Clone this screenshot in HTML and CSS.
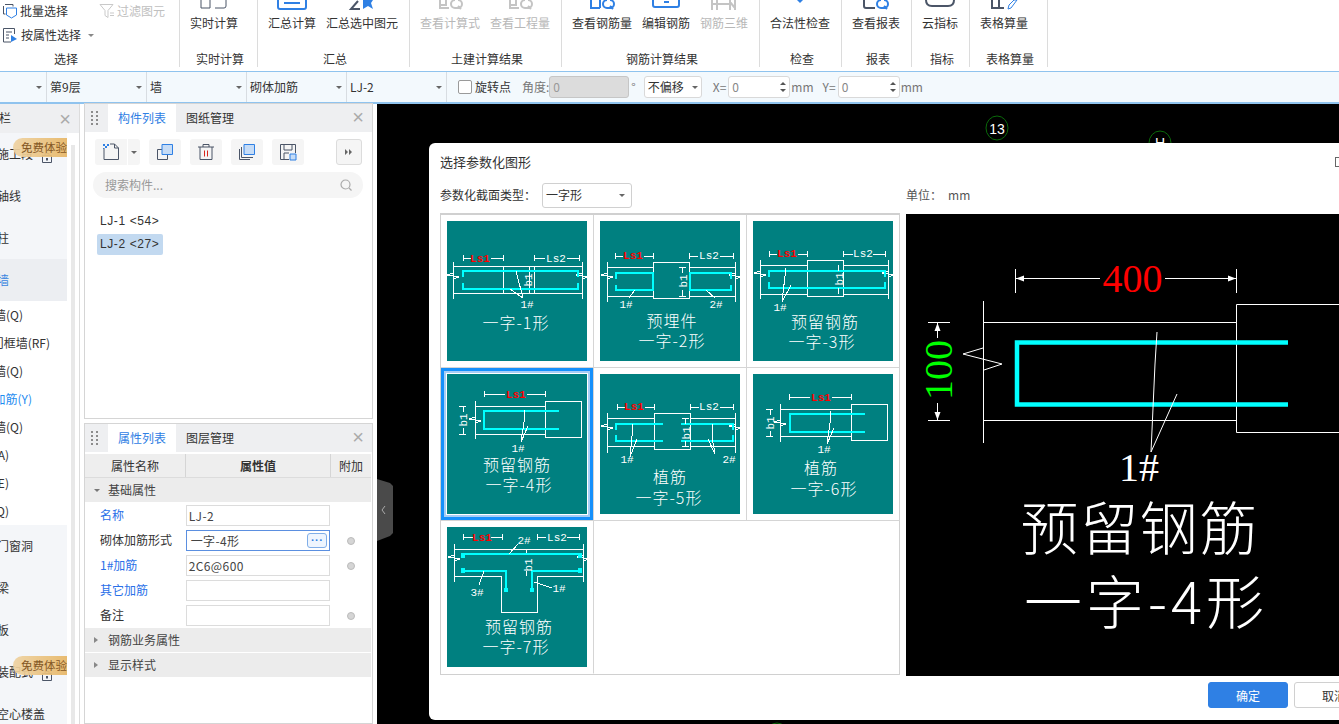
FILE: index.html
```html
<!DOCTYPE html>
<html lang="zh">
<head>
<meta charset="utf-8">
<title>选择参数化图形</title>
<link rel="stylesheet" href="styles.css">
</head>
<body>
<div class="app">
  <header class="ribbon">
    <section class="rb-group g-select">
      <div class="sel-tools">
        <div class="sel-row">
          <span class="sel-item"><svg class="ic16" viewBox="0 0 16 16"><path class="ic-dk" d="M3 1.5h8v2M1.5 3v8h2"/><path class="ic-bl" d="M4.5 5h10v7l-5 3-5-3z"/></svg>批量选择</span>
          <span class="sel-item dis"><svg class="ic16" viewBox="0 0 16 16"><path class="ic-gy" d="M1 1.5h13l-5 6v7l-3-2v-5z"/><path class="ic-gy" d="M11 10h4M11 12.500h4"/></svg>过滤图元</span>
        </div>
        <div class="sel-row">
          <span class="sel-item"><svg class="ic16" viewBox="0 0 16 16"><path class="ic-dk" d="M9 15H1.500V1.500h11V7M4 5h6M4 8h3M4 11h3"/><path class="ic-fill" d="M9 8l6 4-6 3z"/></svg>按属性选择<i class="caret caret-g"></i></span>
        </div>
      </div>
      <div class="rb-label lbl-left">选择</div>
    </section>
    <section class="rb-group g-live">
      <div class="rb-btns">
        <div class="rb-btn"><svg class="top-ic" viewBox="0 0 32 10"><path class="ic-dk" d="M3 0v8h9V0M17 8h9q2 0 2-2V0"/></svg><span>实时计算</span></div>
      </div>
      <div class="rb-label">实时计算</div>
    </section>
    <section class="rb-group g-sum">
      <div class="rb-btns">
        <div class="rb-btn"><svg class="top-ic" viewBox="0 0 32 10"><path class="ic-bl2" d="M2 0v7q0 2 2 2h24q2 0 2-2V0"/><path class="ic-bl2" d="M8 3h16"/></svg><span>汇总计算</span></div>
        <div class="rb-btn"><svg class="top-ic" viewBox="0 0 32 10"><path class="ic-dk2" d="M12 1L5 9h9"/><path class="ic-fill" d="M17 0h10l-2 3 2 6-5-3-5 3z"/></svg><span>汇总选中图元</span></div>
      </div>
      <div class="rb-label">汇总</div>
    </section>
    <section class="rb-group g-civil">
      <div class="rb-btns">
        <div class="rb-btn dis"><svg class="top-ic" viewBox="0 0 32 10"><path class="ic-gy2" d="M6 0v8h9M12 0v5H6M21 0a4 4 0 0 0 0 8h3a4 4 0 0 0 0-8M24 6l3 3"/></svg><span>查看计算式</span></div>
        <div class="rb-btn dis"><svg class="top-ic" viewBox="0 0 32 10"><path class="ic-gy2" d="M6 0v8h9M12 0v5H6M21 0a4 4 0 0 0 0 8h3a4 4 0 0 0 0-8M24 6l3 3"/></svg><span>查看工程量</span></div>
      </div>
      <div class="rb-label">土建计算结果</div>
    </section>
    <section class="rb-group g-rebar">
      <div class="rb-btns">
        <div class="rb-btn"><svg class="top-ic" viewBox="0 0 32 10"><path class="ic-bl2" d="M5 0v8h9M14 0v8M21 0a4 4 0 0 0 0 8h3a4 4 0 0 0 0-8M24 6l3 3"/></svg><span>查看钢筋量</span></div>
        <div class="rb-btn"><svg class="top-ic" viewBox="0 0 32 10"><path class="ic-bl2" d="M3 0v5q0 2 2 2h22q2 0 2-2V0"/><path class="ic-bl2" d="M14 2h5"/></svg><span>编辑钢筋</span></div>
        <div class="rb-btn dis"><svg class="top-ic" viewBox="0 0 32 10"><path class="ic-gy2" d="M4 0v10M9 0v10M4 4h18M22 0v10M27 0v10M22 2l5 6"/></svg><span>钢筋三维</span></div>
      </div>
      <div class="rb-label">钢筋计算结果</div>
    </section>
    <section class="rb-group g-check">
      <div class="rb-btns">
        <div class="rb-btn"><svg class="top-ic" viewBox="0 0 32 10"><path class="ic-fill" d="M13 0h6l-3 3z"/></svg><span>合法性检查</span></div>
      </div>
      <div class="rb-label">检查</div>
    </section>
    <section class="rb-group g-report">
      <div class="rb-btns">
        <div class="rb-btn"><svg class="top-ic" viewBox="0 0 32 10"><path class="ic-dk2" d="M4 0v6q0 2 2 2h9"/><path class="ic-bl2" d="M21 0a4 4 0 0 0 0 8h3a4 4 0 0 0 0-8M24 6l3 3"/></svg><span>查看报表</span></div>
      </div>
      <div class="rb-label">报表</div>
    </section>
    <section class="rb-group g-index">
      <div class="rb-btns">
        <div class="rb-btn"><svg class="top-ic" viewBox="0 0 32 10"><path class="ic-dk2" d="M2 0q0 6 6 6h16q6 0 6-6"/></svg><span>云指标</span></div>
      </div>
      <div class="rb-label">指标</div>
    </section>
    <section class="rb-group g-table">
      <div class="rb-btns">
        <div class="rb-btn"><svg class="top-ic" viewBox="0 0 32 10"><path class="ic-dk2" d="M4 0v8h12M11 0v8"/><path class="ic-bl" d="M20 9l1-4 5-5h3l-6 8z"/></svg><span>表格算量</span></div>
      </div>
      <div class="rb-label">表格算量</div>
    </section>
  </header>

  <div class="optbar">
    <div class="opt-cell c-first"><i class="caret"></i></div>
    <div class="opt-cell">第9层<i class="caret"></i></div>
    <div class="opt-cell">墙<i class="caret"></i></div>
    <div class="opt-cell">砌体加筋<i class="caret"></i></div>
    <div class="opt-cell">LJ-2<i class="caret"></i></div>
    <label class="opt-check"><span class="checkbox"></span>旋转点</label>
    <span class="opt-text t-angle">角度:</span>
    <span class="field f-angle">0</span>
    <span class="opt-text t-deg">°</span>
    <span class="field f-offset">不偏移<i class="caret"></i></span>
    <span class="opt-text t-x">X=</span>
    <span class="field f-num">0<span class="spin"><i class="up"></i><i class="down"></i></span></span>
    <span class="opt-text t-mm">mm</span>
    <span class="opt-text t-y">Y=</span>
    <span class="field f-num">0<span class="spin"><i class="up"></i><i class="down"></i></span></span>
    <span class="opt-text t-mm">mm</span>
  </div>

  <main class="workspace">
    <aside class="side">
      <div class="nav">
        <div class="nav-head"><span class="nav-title">栏</span><span class="close nav-close">×</span></div>
        <div class="nav-body">
          <ul class="nav-list">
            <li class="nav-main r33">施工段<svg class="lock" viewBox="0 0 10 10"><path class="ic-dk" d="M.5 2.500h9v7h-9zM3 2.500V.5h4v2"/><path class="ic-fill2" d="M4 5h2v2.500H4z"/></svg><span class="badge">免费体验</span></li>
            <li class="nav-main r21">轴线</li>
            <li class="nav-main r9">柱</li>
            <li class="nav-main r9 active">墙</li>
            <li class="nav-sub r23">砌体墙(Q)</li>
            <li class="nav-sub r17">人防门框墙(RF)</li>
            <li class="nav-sub r23">砌块墙(Q)</li>
            <li class="nav-sub r35 blue">砌体加筋(Y)</li>
            <li class="nav-sub r23">保温墙(Q)</li>
            <li class="nav-sub r58">暗梁(A)</li>
            <li class="nav-sub r58">墙垛(E)</li>
            <li class="nav-sub r58">幕墙(Q)</li>
            <li class="nav-main r33">门窗洞</li>
            <li class="nav-main r9">梁</li>
            <li class="nav-main r9">板</li>
            <li class="nav-main r33">装配式<svg class="lock" viewBox="0 0 10 10"><path class="ic-dk" d="M.5 2.500h9v7h-9zM3 2.500V.5h4v2"/><path class="ic-fill2" d="M4 5h2v2.500H4z"/></svg><span class="badge">免费体验</span></li>
            <li class="nav-main r22">空心楼盖</li>
          </ul>
          <div class="scrollbar"></div>
        </div>
      </div>

      <div class="panels">
        <section class="panel p-list">
          <div class="panel-head">
            <svg class="grip" viewBox="0 0 8 14"><path d="M0 0h2v2H0zM5 0h2v2H5zM0 4h2v2H0zM5 4h2v2H5zM0 8h2v2H0zM5 8h2v2H5zM0 12h2v2H0zM5 12h2v2H5z"/></svg>
            <span class="tab on">构件列表</span><span class="tab">图纸管理</span>
            <span class="close">×</span>
          </div>
          <div class="tools">
            <span class="tool t-new"><svg class="ic18" viewBox="0 0 18 18"><path class="ic-dk" d="M2 5v11.500h14.500V5l-4-4H8"/><path class="ic-dk" d="M12.500 1v4h4"/><path class="ic-fill" d="M1 1h2v2H1zM3 3h2v2H3zM5 1h2v2H5zM1 5h1v1H1z"/></svg></span>
            <span class="tool-drop"><i class="caret"></i></span>
            <span class="tool"><svg class="ic18" viewBox="0 0 18 18"><path class="ic-dk" d="M1.500 6.500h10v10h-10z"/><path class="ic-tint" d="M6 1.500h10.500v10H6z"/></svg></span>
            <span class="tool"><svg class="ic18" viewBox="0 0 18 18"><path class="ic-dk" d="M1 4h16M6 4V1.500h6V4M3 4v12.500h12V4"/><path class="ic-red" d="M7.500 7.500v6M10.500 7.500v6"/></svg></span>
            <span class="tool"><svg class="ic18" viewBox="0 0 18 18"><path class="ic-dk" d="M1.500 6v10.500H12M3.500 4v10.500H15"/><path class="ic-tint" d="M6 1.500h10.500v10H6z"/></svg></span>
            <span class="tool"><svg class="ic18" viewBox="0 0 18 18"><path class="ic-dk" d="M10 16.500H1.500v-15h15V10M5 1.500V7h8V1.500M5 16.500V10h5"/><path class="ic-tint" d="M11 11h6v6h-6z"/></svg></span>
            <span class="tool-more"><svg class="ic8" viewBox="0 0 8 6"><path d="M0 0l3 3-3 3zM4 0l3 3-3 3z"/></svg></span>
          </div>
          <div class="search"><span>搜索构件...</span><svg class="ic12" viewBox="0 0 12 12"><circle cx="5.500" cy="5.500" r="4.500"/><path d="M9 9l2.500 2.500"/></svg></div>
          <ul class="items">
            <li class="item"><span>LJ-1 &lt;54&gt;</span></li>
            <li class="item picked"><span>LJ-2 &lt;27&gt;</span></li>
          </ul>
        </section>

        <section class="panel p-props">
          <div class="panel-head">
            <svg class="grip" viewBox="0 0 8 14"><path d="M0 0h2v2H0zM5 0h2v2H5zM0 4h2v2H0zM5 4h2v2H5zM0 8h2v2H0zM5 8h2v2H5zM0 12h2v2H0zM5 12h2v2H5z"/></svg>
            <span class="tab on">属性列表</span><span class="tab">图层管理</span>
            <span class="close">×</span>
          </div>
          <div class="prop-head"><span class="ph-name">属性名称</span><span class="ph-val">属性值</span><span class="ph-add">附加</span></div>
          <div class="prop-group open"><i class="tri-d"></i>基础属性</div>
          <div class="prop-row"><span class="pn blue2">名称</span><span class="pv">LJ-2</span><span class="pa"></span></div>
          <div class="prop-row"><span class="pn">砌体加筋形式</span><span class="pv focus">一字-4形<b class="dots">···</b></span><span class="pa"><i class="dot"></i></span></div>
          <div class="prop-row"><span class="pn blue2">1#加筋</span><span class="pv">2C6@600</span><span class="pa"><i class="dot"></i></span></div>
          <div class="prop-row"><span class="pn blue2">其它加筋</span><span class="pv"></span><span class="pa"></span></div>
          <div class="prop-row"><span class="pn">备注</span><span class="pv"></span><span class="pa"><i class="dot"></i></span></div>
          <div class="prop-group"><i class="tri-r"></i>钢筋业务属性</div>
          <div class="prop-group"><i class="tri-r"></i>显示样式</div>
        </section>
      </div>
    </aside>

    <div class="canvas">
      <svg class="axis" viewBox="0 0 962 620">
        <ellipse class="axis-c" cx="620" cy="24" rx="11" ry="12"/>
        <text class="axis-t" x="620" y="30">13</text>
        <ellipse class="axis-c" cx="783" cy="39" rx="11" ry="12"/>
        <text class="axis-t" x="783" y="44">H</text>
        <ellipse class="axis-c" cx="400" cy="631" rx="11" ry="12"/>
      </svg>
      <svg class="handle" viewBox="0 0 16 62"><path class="h-bg" d="M0 0l13 4 3 3v47l-3 3-13 5z"/><path class="h-ch" d="M8 27l-3 4 3 4"/></svg>

      <div class="dialog">
        <div class="dlg-title">选择参数化图形<span class="maxbox"></span></div>
        <div class="dlg-type">
          <span class="type-label">参数化截面类型：</span>
          <span class="type-select">一字形<i class="caret"></i></span>
          <span class="unit"><span>单位：</span><span>mm</span></span>
        </div>
        <div class="dlg-body">
          <div class="shape-grid">
            <div class="cell">
              <svg class="thumb" viewBox="0 0 140 140">
                <path class="ln" d="M16 34v6M16 37h8M44 37h12M56 34v6M87 34v6M87 37h11M120 37h12M132 34v6"/>
                <text class="lbl red" x="33" y="41">Ls1</text><text class="lbl" x="109" y="41">Ls2</text>
                <path class="ln" d="M6 45h129M6 72h129M6 41v37M135 41v37M56 45v27M87 45v27M82 45v27"/>
                <path class="ln" d="M6 52L0 54l12 2-6 2M135 52l-6 2 12 2-6 2"/>
                <path class="cy" d="M16 56v-6h115v6M16 62v6h115v-6"/>
                <text class="lbl vert" transform="translate(85 59) rotate(-90)">b1</text>
                <path class="ln" d="M69 50l7 27M63 68l13 9"/>
                <text class="lbl" x="80" y="87">1#</text>
                <text class="cap" x="69" y="108">一字-1形</text>
              </svg>
            </div>
            <div class="cell">
              <svg class="thumb" viewBox="0 0 140 140">
                <path class="ln" d="M15 32v6M15 35h8M44 35h9M53 32v6M89 32v6M89 35h9M120 35h13M133 32v6"/>
                <text class="lbl red" x="33" y="38">Ls1</text><text class="lbl" x="109" y="38">Ls2</text>
                <path class="ln" d="M7 46h46M7 75h46M89 46h46M89 75h46M7 41v40M135 41v40M53.500 41.500h36v36h-36z"/>
                <path class="ln" d="M7 52L1 54l12 2-6 2M135 52l-6 2 12 2-6 2"/>
                <path class="cy" d="M16 58v-6h37v17H16v-5M131 58v-6H90v17h41v-5"/>
                <path class="ln" d="M79 46h7M82 46v6M82 69v6M79 75h7"/>
                <text class="lbl vert" transform="translate(87 60) rotate(-90)">b1</text>
                <path class="ln" d="M35 69l-6 8M106 69l9 8"/>
                <text class="lbl" x="26" y="87">1#</text><text class="lbl" x="116" y="87">2#</text>
                <text class="cap" x="72" y="106">预埋件</text>
                <text class="cap" x="72" y="126">一字-2形</text>
              </svg>
            </div>
            <div class="cell">
              <svg class="thumb" viewBox="0 0 140 140">
                <path class="ln" d="M16 30v6M16 33h8M45 33h9M54 30v6M90 30v6M90 33h10M120 33h12M132 30v6"/>
                <text class="lbl red" x="34" y="36">Ls1</text><text class="lbl" x="110" y="36">Ls2</text>
                <path class="ln" d="M7 44h47M7 73h47M90 44h45M90 73h45M7 39v39M135 39v39M54.500 39.500h36v36h-36z"/>
                <path class="ln" d="M7 50L1 52l12 2-6 2M135 50l-6 2 12 2-6 2"/>
                <path class="cy" d="M16 56v-6h116v6M16 61v6h116v-6"/>
                <path class="ln" d="M85 44v6M85 67v6"/>
                <text class="lbl vert" transform="translate(90 58) rotate(-90)">b1</text>
                <path class="ln" d="M32 47v8l-3 26M38 64l-9 17"/>
                <text class="lbl" x="27" y="90">1#</text>
                <text class="cap" x="72" y="107">预留钢筋</text>
                <text class="cap" x="69" y="127">一字-3形</text>
              </svg>
            </div>
            <div class="cell sel">
              <svg class="thumb" viewBox="0 0 140 140">
                <path class="ln" d="M37 17v6M37 20h21M80 20h18M98 17v6"/>
                <text class="lbl red" x="69" y="24">Ls1</text>
                <path class="ln" d="M28 32h70M28 60h70M28 27v38M98.500 27.500h36v36h-36z"/>
                <path class="ln" d="M28 43l-6 2 12 2-6 2"/>
                <path class="cy" d="M112 37H37v18h75"/>
                <path class="ln" d="M12 32h7M12 60h7M16 32v6M16 54v6"/>
                <text class="lbl vert" transform="translate(20 46) rotate(-90)">b1</text>
                <path class="ln" d="M77 36v12l-3 20M81 52l-7 16"/>
                <text class="lbl" x="71" y="78">1#</text>
                <text class="cap" x="70" y="97">预留钢筋</text>
                <text class="cap" x="72" y="117">一字-4形</text>
              </svg>
            </div>
            <div class="cell">
              <svg class="thumb" viewBox="0 0 140 140">
                <path class="ln" d="M17 30v6M17 33h8M45 33h9M54 30v6M90 30v6M90 33h9M120 33h13M133 30v6"/>
                <text class="lbl red" x="34" y="36">Ls1</text><text class="lbl" x="109" y="36">Ls2</text>
                <path class="ln" d="M7 44h47M7 72h47M90 44h45M90 72h45M7 39v40M135 39v40M54.500 39.500h36v36h-36z"/>
                <path class="ln" d="M7 50L1 52l12 2-6 2M135 50l-6 2 12 2-6 2"/>
                <path class="cy" d="M16 56v-6h47M16 61v6h47M81 50h52v6M81 67h52v-6"/>
                <path class="ln" d="M82 44h7M85 44v6M85 67v5M82 72h7"/>
                <text class="lbl vert" transform="translate(90 59) rotate(-90)">b1</text>
                <path class="ln" d="M32 50v12l-2 21M37 65l-7 18M112 50v13l3 17M108 65l7 15"/>
                <text class="lbl" x="27" y="89">1#</text><text class="lbl" x="129" y="89">2#</text>
                <text class="cap" x="70" y="109">植筋</text>
                <text class="cap" x="69" y="130">一字-5形</text>
              </svg>
            </div>
            <div class="cell">
              <svg class="thumb" viewBox="0 0 140 140">
                <path class="ln" d="M36 20v6M36 23h21M79 23h19M98 20v6"/>
                <text class="lbl red" x="68" y="27">Ls1</text>
                <path class="ln" d="M27 35h71M27 62h71M27 30v38M98.500 30.500h36v36h-36z"/>
                <path class="ln" d="M27 46l-6 2 12 2-6 2"/>
                <path class="cy" d="M112 40H37v18h75"/>
                <path class="ln" d="M13 35h7M13 62h7M17 35v6M17 57v5"/>
                <text class="lbl vert" transform="translate(21 49) rotate(-90)">b1</text>
                <path class="ln" d="M77 37v12l-3 21M81 54l-7 16"/>
                <text class="lbl" x="71" y="79">1#</text>
                <text class="cap" x="68" y="100">植筋</text>
                <text class="cap" x="71" y="121">一字-6形</text>
              </svg>
            </div>
            <div class="cell">
              <svg class="thumb" viewBox="0 0 140 140">
                <path class="ln" d="M16 7v6M16 10h10M44 10h11M55 7v6M90 7v6M90 10h9M120 10h12M132 7v6"/>
                <text class="lbl red" x="35" y="14">Ls1</text><text class="lbl" x="110" y="14">Ls2</text>
                <path class="ln" d="M7 22h129M7 49h47M90 49h46M7 17v38M136 17v38M54 49v36h36V49M79 22v5M79 44v5"/>
                <path class="ln" d="M7 28L1 30l12 2-6 2M136 28l-6 2 12 2-6 2"/>
                <path class="cy" d="M16 30v-3h117v3M16 42v2h43v20M133 42v2H85v20"/>
                <path class="blk" d="M14 26h4v5h-4zM131 26h4v5h-4zM14 41h4v5h-4zM131 41h4v5h-4zM57 61h4v4h-4zM83 61h4v4h-4z"/>
                <text class="lbl vert" transform="translate(85 38) rotate(-90)">b1</text>
                <path class="ln" d="M71 17l-9 10M37 44l-5 14M87 55l18 6"/>
                <text class="lbl" x="77" y="17">2#</text><text class="lbl" x="30" y="69">3#</text><text class="lbl" x="112" y="65">1#</text>
                <text class="cap" x="72" y="106">预留钢筋</text>
                <text class="cap" x="69" y="126">一字-7形</text>
              </svg>
            </div>
            <div class="cell blank"></div>
            <div class="cell blank"></div>
          </div>
          <div class="preview">
            <svg class="preview-art" viewBox="0 0 433 462">
              <path class="pl" d="M109.500 55v24M330.500 55v24M110 64.500h84M259 64.500h71"/>
              <path class="pw" d="M110 64.500l8-3v6zM330 64.500l-8-3v6zM31.500 109l-3 8h6zM31.500 206l-3-8h6z"/>
              <text class="big red" x="226.500" y="78">400</text>
              <path class="pl" d="M77.500 87v142M77.500 108.500h253M77.500 206.500h253M330.500 90.500h110v128h-110zM22 108.500h22M22 206.500h22M31.500 108v16M31.500 189v17"/>
              <path class="pl" d="M77 134l-20 6 39 10-18 6"/>
              <path class="pc" d="M382 128.500H111v62h271"/>
              <text class="big grn" transform="translate(46 156) rotate(-90)">100</text>
              <path class="pl" d="M251 118l-2 32-4 88M271 180l-26 58"/>
              <text class="big wht" x="233" y="267">1#</text>
              <text class="pcap" x="233" y="336" textLength="237">预留钢筋</text>
              <text class="pcap" x="238" y="410" textLength="240">一字-4形</text>
            </svg>
          </div>
        </div>
        <div class="dlg-foot"><button class="btn primary">确定</button><button class="btn">取消</button></div>
      </div>
    </div>
  </main>
</div>
</body>
</html>
```

FILE: styles.css
```css
* { box-sizing: border-box; }
html, body { margin: 0; padding: 0; height: 100%; }
body {
  width: 1339px; height: 724px; overflow: hidden; background: #fff; color: #333;
  font: 12px/1.2 "Noto Sans CJK SC", "Liberation Sans", sans-serif;
}
ul { list-style: none; margin: 0; padding: 0; }
.app { display: flex; flex-direction: column; height: 724px; width: 1339px; }

/* shared icon strokes */
svg { display: block; flex: none; }
.ic-dk, .ic-bl, .ic-gy, .ic-bl2, .ic-dk2, .ic-gy2, .ic-red, .ic-tint { fill: none; stroke-width: 1; }
.ic-dk { stroke: #4b5567; }
.ic-bl { stroke: #2f80e4; }
.ic-gy { stroke: #c9c9c9; }
.ic-dk2 { stroke: #4b5567; stroke-width: 2; }
.ic-bl2 { stroke: #2f80e4; stroke-width: 2; }
.ic-gy2 { stroke: #c4c4c4; stroke-width: 2; }
.ic-red { stroke: #d9261c; }
.ic-tint { stroke: #2f80e4; fill: #c6dcf6; }
.ic-fill { fill: #2f80e4; }
.ic-fill2 { fill: #4b5567; }
.ic16 { width: 16px; height: 16px; }
.ic18 { width: 18px; height: 18px; }
.ic8 { width: 8px; height: 6px; fill: #666; }
.ic12 { width: 12px; height: 12px; fill: none; stroke: #aaa; stroke-width: 1.200; }
.caret { display: block; width: 0; height: 0; border: 3px solid transparent; border-top: 3px solid #666; border-bottom: 0; }
.caret-g { border-top-color: #888; margin-left: 4px; }

/* ribbon */
.ribbon { flex: none; height: 71px; display: flex; align-items: flex-start; background: #fff; }
.rb-group { height: 67px; display: flex; flex-direction: column; border-right: 1px solid #dcdcdc; padding: 0 10px; flex: none; }
.g-select { width: 180px; padding: 0 0 0 2px; }
.g-live { width: 78px; }
.g-sum { width: 152px; }
.g-civil { width: 152px; }
.g-rebar { width: 198px; }
.g-check { width: 82px; }
.g-report { width: 70px; }
.g-index { width: 58px; }
.g-table { width: 78px; }
.rb-btns { display: flex; gap: 10px; height: 50px; flex: none; }
.rb-btn { display: flex; flex-direction: column; align-items: center; color: #333; }
.rb-btn span { margin-top: 6px; line-height: 14px; white-space: nowrap; }
.rb-btn.dis { color: #b8b8b8; }
.top-ic { width: 32px; height: 10px; }
.rb-label { text-align: center; line-height: 17px; color: #333; white-space: nowrap; padding-left: 3px; }
.lbl-left { padding: 0 49px 0 0; }
.sel-tools { display: flex; flex-direction: column; height: 50px; flex: none; }
.sel-row { height: 22px; display: flex; gap: 31px; align-items: center; }
.sel-row + .sel-row { margin-top: 2px; }
.sel-item { display: flex; align-items: center; gap: 2px; color: #333; }
.sel-row + .sel-row .sel-item { gap: 3px; }
.sel-item.dis { color: #c0c0c0; }

/* option bar */
.optbar { flex: none; height: 33px; display: flex; align-items: center; background: #f3f9fd; border-top: 1px solid #8fc3ee; border-bottom: 2px solid #8fc3ee; color: #333; }
.opt-cell { width: 100px; height: 100%; display: flex; align-items: center; justify-content: space-between; padding: 0 3px; border-right: 1px solid #d8dde2; }
.opt-cell .caret { margin-right: 1px; }
.c-first { width: 47px; justify-content: flex-end; }
.opt-check { display: flex; align-items: center; gap: 3px; margin-left: 11px; }
.checkbox { width: 14px; height: 14px; border: 1px solid #9a9a9a; border-radius: 2px; background: #fff; }
.opt-text { color: #777; white-space: nowrap; }
.t-angle { margin-left: 11px; }
.t-deg { margin: 0 8px 0 2px; }
.t-x { margin-left: 11px; margin-right: 2px; }
.t-y { margin-left: 9px; margin-right: 2px; }
.t-mm { margin-left: 1px; }
.field { height: 22px; display: flex; align-items: center; border: 1px solid #d9d9d9; border-radius: 3px; background: #fff; padding: 0 3px; }
.f-angle { width: 80px; background: #dcdcdc; border-color: #c6c6c6; color: #999; }
.f-offset { width: 58px; justify-content: space-between; height: 22px; color: #333; }
.f-num { width: 62px; justify-content: space-between; color: #888; }
.spin { display: flex; flex-direction: column; gap: 4px; }
.spin i { display: block; width: 0; height: 0; border: 3px solid transparent; }
.spin .up { border-top: 0; border-bottom: 3px solid #555; }
.spin .down { border-bottom: 0; border-top: 3px solid #555; }

/* workspace */
.workspace { flex: 1; min-height: 0; display: flex; }
.side { flex: none; width: 377px; display: flex; background: #fff; }

/* left nav */
.nav { width: 80px; flex: none; border-right: 1px solid #dcdcdc; display: flex; flex-direction: column; }
.nav-head { height: 29px; flex: none; background: #eeeff1; display: flex; align-items: center; justify-content: space-between; padding: 0 8px 0 0; font-size: 12px; }
.nav-title { margin-left: -1px; }
.close { font: 20px/20px "Liberation Sans", sans-serif; color: #aaa; }
.nav-body { flex: 1; min-height: 0; display: flex; overflow: hidden; }
.nav-list { width: 67px; flex: none; }
.nav-list li { display: flex; align-items: center; justify-content: flex-end; white-space: nowrap; overflow: hidden; position: relative; }
.nav-main { height: 42px; background: #f4f6f9; }
.nav-sub { height: 28px; background: #fff; }
.nav-list .active { background: #eceef2; color: #3a85e0; }
.blue { color: #1f8cf0; }
.r9 { padding-right: 58px; }
.r17 { padding-right: 17px; }
.r21 { padding-right: 46px; }
.r22 { padding-right: 22px; }
.r23 { padding-right: 44px; }
.r33 { padding-right: 34px; }
.r35 { padding-right: 35px; }
.r58 { padding-right: 58px; }
.lock { width: 10px; height: 10px; position: absolute; right: 15px; top: 20px; }
.badge { position: absolute; right: 0; top: 5px; height: 19px; width: 54px; line-height: 19px; padding-left: 8px; color: #7a4a10; font-size: 11.500px; background: linear-gradient(90deg, #efd3a2, #e8b766); border-radius: 10px 0 0 10px; opacity: .92; }
.scrollbar { width: 4px; margin: 12px 0 0 4px; background: #e8e8e8; flex: none; }

/* panels */
.panels { margin-left: 4px; width: 289px; flex: none; display: flex; flex-direction: column; gap: 4px; }
.panel { border: 1px solid #d5d5d5; background: #fff; display: flex; flex-direction: column; }
.p-list { height: 316px; margin-top: -1px; }
.p-props { flex: 1; min-height: 0; overflow: hidden; }
.panel-head { height: 28px; flex: none; background: #eeeff1; display: flex; align-items: stretch; position: relative; }
.grip { width: 8px; height: 14px; margin: 7px 9px 0 6px; fill: #8c8c8c; }
.tab { width: 68px; text-align: center; line-height: 28px; color: #333; }
.tab.on { background: #fff; color: #2f80e4; }
.panel-head .close { position: absolute; right: 8px; top: 3px; }
.tools { display: flex; align-items: center; padding: 7px 0 0 10px; gap: 9px; flex: none; }
.tool, .tool-drop, .tool-more { height: 26px; background: #f5f5f5; border-radius: 3px; display: flex; align-items: center; justify-content: center; }
.tool { width: 32px; }
.t-new { border-radius: 3px 0 0 3px; }
.tool-drop { width: 12px; margin-left: -8px; border-radius: 0 3px 3px 0; }
.tool-more { width: 26px; border: 1px solid #dcdcdc; margin-left: 23px; }
.search { margin: 7px 9px 0 8px; height: 26px; flex: none; background: #f5f5f5; border-radius: 13px; display: flex; align-items: center; justify-content: space-between; padding: 0 11px 0 12px; color: #999; }
.items { padding: 13px 12px 0; }
.item { height: 21px; margin-bottom: 2px; display: flex; align-items: center; font-family: "Liberation Sans", sans-serif; font-size: 12px; color: #333; letter-spacing: .6px; }
.item span { padding: 0 4px 0 3px; line-height: 21px; }
.picked span { background: #c2d9f0; border-radius: 2px; }
.prop-head { height: 24px; margin-top: 2px; flex: none; display: flex; background: #eeeeee; border-bottom: 1px solid #dcdcdc; text-align: center; line-height: 23px; margin-right: 1px; }
.ph-name { width: 101px; border-right: 1px solid #d5d5d5; }
.ph-val { width: 145px; border-right: 1px solid #d5d5d5; font-weight: 700; }
.ph-add { flex: 1; }
.prop-group { height: 24px; flex: none; margin-bottom: 1px; background: #ececec; display: flex; align-items: center; gap: 8px; padding-left: 9px; color: #444; margin-right: 1px; }
.tri-d { width: 6px; height: 0; border: 3px solid transparent; border-top: 3px solid #777; border-bottom: 0; }
.tri-r { width: 6px; height: 6px; border: 3px solid transparent; border-left: 4px solid #888; border-right: 0; }
.prop-row { height: 25px; flex: none; display: flex; align-items: center; }
.pn { width: 101px; padding-left: 15px; color: #333; white-space: nowrap; }
.blue2 { color: #2a70e8; }
.pv { width: 145px; height: 21px; border: 1px solid #dcdcdc; padding: 0 2px; line-height: 19px; display: flex; align-items: center; justify-content: space-between; color: #444; letter-spacing: .4px; }
.pv.focus { border-color: #5b8fe0; padding-left: 4px; }
.dots { width: 20px; height: 15px; border: 1px solid #80aee8; border-radius: 3px; background: #eef5fe; color: #2f80e4; font: 700 11px/12px "Liberation Sans", sans-serif; text-align: center; }
.pa { width: 42px; display: flex; justify-content: center; }
.dot { width: 8px; height: 8px; border-radius: 50%; background: #d5d5d5; border: 1px solid #bbb; }

/* canvas */
.canvas { flex: 1; min-width: 0; background: #000; position: relative; overflow: hidden; }
.axis { position: absolute; left: 0; top: 0; width: 962px; height: 620px; }
.axis-c { fill: none; stroke: #0a6a0a; }
.axis-t { fill: #fff; font: 14px "Liberation Sans", sans-serif; text-anchor: middle; }
.handle { position: absolute; left: 0; top: 375px; width: 16px; height: 62px; }
.h-bg { fill: #4a4a4a; }
.h-ch { fill: none; stroke: #aaa; }

/* dialog */
.dialog { position: absolute; left: 52px; top: 39px; width: 960px; height: 577px; background: #fff; border-radius: 6px 0 0 6px; padding: 0 0 0 11px; display: flex; flex-direction: column; }
.dlg-title { height: 37px; flex: none; display: flex; align-items: center; justify-content: space-between; font-size: 13px; color: #333; }
.maxbox { width: 10px; height: 10px; border: 1px solid #666; margin-right: 44px; }
.dlg-type { height: 33px; padding-bottom: 2px; flex: none; display: flex; align-items: center; }
.type-label { width: 102px; white-space: nowrap; font-size: 12px; color: #333; }
.type-select { width: 90px; height: 25px; border: 1px solid #d0d0d0; border-radius: 3px; display: flex; align-items: center; justify-content: space-between; padding: 0 6px 0 3px; color: #333; }
.unit { margin-left: 274px; display: flex; gap: 6px; color: #555; }
.dlg-body { display: flex; align-items: flex-start; height: 463px; flex: none; }
.shape-grid { width: 460px; height: 462px; flex: none; margin-right: 6px; border: 1px solid #d0d0d0; border-top-width: 2px; display: grid; grid-template-columns: repeat(3, 153px); grid-template-rows: repeat(3, 153px); }
.cell { display: flex; align-items: center; justify-content: center; border-right: 1px solid #d5d5d5; border-bottom: 1px solid #d5d5d5; }
.cell:nth-child(3n) { border-right-color: transparent; }
.cell:nth-child(n+7) { border-bottom-color: transparent; }
.cell.blank { border-color: transparent; }
.cell.sel { box-shadow: inset 0 0 0 3px #1590fb, inset 0 0 0 5px #a6cdf5; }
.thumb { width: 140px; height: 140px; background: #008080; }
.ln { fill: none; stroke: #fff; stroke-width: 1; shape-rendering: crispEdges; }
.cy { fill: none; stroke: #00ffff; stroke-width: 2; shape-rendering: crispEdges; }
.blk { fill: #00ffff; }
.lbl { fill: #fff; font: 11px "Liberation Mono", monospace; text-anchor: middle; }
.lbl.red { fill: #ff0000; font-weight: 700; }
.vert { text-anchor: middle; }
.cap { fill: #fff; font: 300 16px "Noto Sans CJK SC", sans-serif; text-anchor: middle; letter-spacing: 1px; }
.preview { flex: none; width: 433px; height: 462px; margin-top: 1px; background: #000; overflow: hidden; }
.preview-art { width: 433px; height: 462px; }
.pl { fill: none; stroke: #fff; stroke-width: 1; }
.pw { fill: #fff; }
.pc { fill: none; stroke: #00ffff; stroke-width: 4.500; }
.big { font: 40px "Liberation Serif", serif; text-anchor: middle; }
.big.red { fill: #ff0000; }
.big.grn { fill: #00ff00; }
.big.wht { fill: #fff; }
.pcap { fill: #fff; font: 300 58px "Noto Sans CJK SC", sans-serif; text-anchor: middle; }
.dlg-foot { height: 33px; flex: none; display: flex; align-items: flex-start; padding: 6px 0 0 768px; gap: 6px; }
.btn { width: 80px; height: 26px; border: 1px solid #d0d0d0; border-radius: 3px; background: #fff; color: #333; font: 12px "Noto Sans CJK SC", sans-serif; padding: 0; flex: none; }
.btn.primary { background: #2f80e4; border-color: #2f80e4; color: #fff; }
```
